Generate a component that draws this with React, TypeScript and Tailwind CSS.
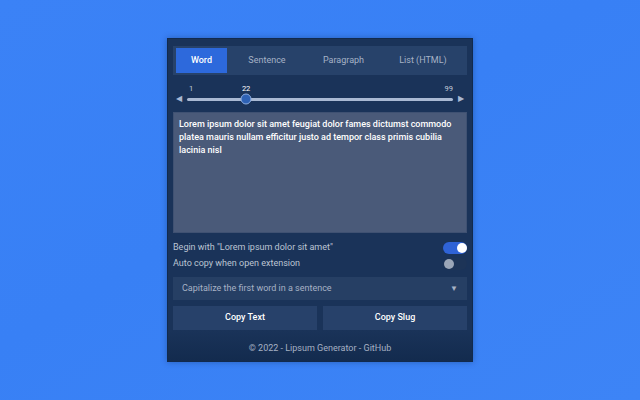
import React, { useState } from "react";

const tabs = [
  { label: "Word", w: "w-[51px]" },
  { label: "Sentence", w: "w-[80px]" },
  { label: "Paragraph", w: "w-[73px]" },
  { label: "List (HTML)", w: "w-[86px]" },
];

const Toggle = ({ on }: { on: boolean }) => (
  <div
    className={`relative w-[24px] h-[12px] rounded-full ${
      on ? "bg-[#2f63d6]" : "bg-[#1d3457]"
    }`}
  >
    <div
      className={`absolute top-[1px] w-[10px] h-[10px] rounded-full ${
        on ? "right-[0px] bg-white" : "left-[1px] bg-[#9aa6b8]"
      }`}
    />
  </div>
);

const App = () => {
  const [active, setActive] = useState(0);
  const value = 22;
  const pct = (value / 99) * 100;

  return (
    <div
      className="w-[640px] h-[400px] flex items-center justify-center bg-[linear-gradient(150deg,#3b82f6_0%,#3880f5_45%,#3d84f6_100%)]"
      style={{ fontFamily: "Roboto, 'Liberation Sans', sans-serif" }}
    >
      <div className="w-[306px] h-[324px] flex flex-col bg-[#1a3359] border border-[#112a4e] shadow-[0_0_6px_rgba(10,30,70,0.35)]">
        <div className="px-[5px] pt-[7px] flex flex-col">
          {/* tabs */}
          <div className="h-[29px] flex items-center bg-[#27426a] pl-[3px]">
            {tabs.map((t, i) => (
              <button
                key={t.label}
                onClick={() => setActive(i)}
                className={`${t.w} h-[25px] flex items-center justify-center text-[9px] ${
                  active === i
                    ? "bg-[#2d69dc] text-white font-medium"
                    : "text-[#a6b2c6]"
                }`}
              >
                {t.label}
              </button>
            ))}
          </div>

          {/* slider */}
          <div className="h-[37px] flex flex-col justify-end pb-[7px]">
            <div className="relative h-[10px] text-[7.5px] text-[#c3ccda] mx-[14px]">
              <span className="absolute left-[2px] top-0">1</span>
              <span
                className="absolute top-0 -translate-x-1/2 text-white"
                style={{ left: `${pct}%` }}
              >
                {value}
              </span>
              <span className="absolute right-[0px] top-0">99</span>
            </div>
            <div className="flex items-center gap-[5px] px-[3px] h-[12px]">
              <span className="text-[8px] text-[#a9b9d3] leading-none">◀</span>
              <div className="relative flex-1 h-[3px] rounded-full bg-[#a9b9d3]">
                <div
                  className="absolute top-1/2 -translate-y-1/2 -translate-x-1/2 w-[11px] h-[11px] rounded-full bg-[#2e62b5] border border-[#8eaee0]"
                  style={{ left: `${pct}%` }}
                />
              </div>
              <span className="text-[8px] text-[#a9b9d3] leading-none">▶</span>
            </div>
          </div>

          {/* output */}
          <div className="h-[121px] bg-[#4a5a79] border border-[#3f5172] px-[5px] pt-[5px] text-[9px] leading-[13px] font-medium text-white">
            Lorem ipsum dolor sit amet feugiat dolor fames dictumst commodo
            platea mauris nullam efficitur justo ad tempor class primis cubilia
            lacinia nisl
          </div>

          {/* toggles */}
          <div className="mt-[8px] flex flex-col gap-[3px] text-[9px] text-[#bcc5d3]">
            <div className="h-[13px] flex items-center justify-between">
              <span>Begin with "Lorem ipsum dolor sit amet"</span>
              <Toggle on />
            </div>
            <div className="h-[13px] flex items-center justify-between">
              <span>Auto copy when open extension</span>
              <Toggle on={false} />
            </div>
          </div>

          {/* select */}
          <div className="mt-[7px] h-[23px] flex items-center justify-between bg-[#263f64] px-[9px] text-[9px] text-[#a7b2c5]">
            <span>Capitalize the first word in a sentence</span>
            <span className="text-[8px]">▼</span>
          </div>

          {/* buttons */}
          <div className="mt-[6px] grid grid-cols-2 gap-[6px]">
            <button className="h-[24px] bg-[#27416a] text-white text-[9px] font-medium">
              Copy Text
            </button>
            <button className="h-[24px] bg-[#27416a] text-white text-[9px] font-medium">
              Copy Slug
            </button>
          </div>
        </div>

        {/* footer */}
        <div className="flex-1 flex items-center justify-center pt-[6px] bg-[linear-gradient(180deg,#1a3359_0%,#132b4e_100%)] text-[9px] text-[#a6b1c3]">
          © 2022 - Lipsum Generator - GitHub
        </div>
      </div>
    </div>
  );
};

export default App;
